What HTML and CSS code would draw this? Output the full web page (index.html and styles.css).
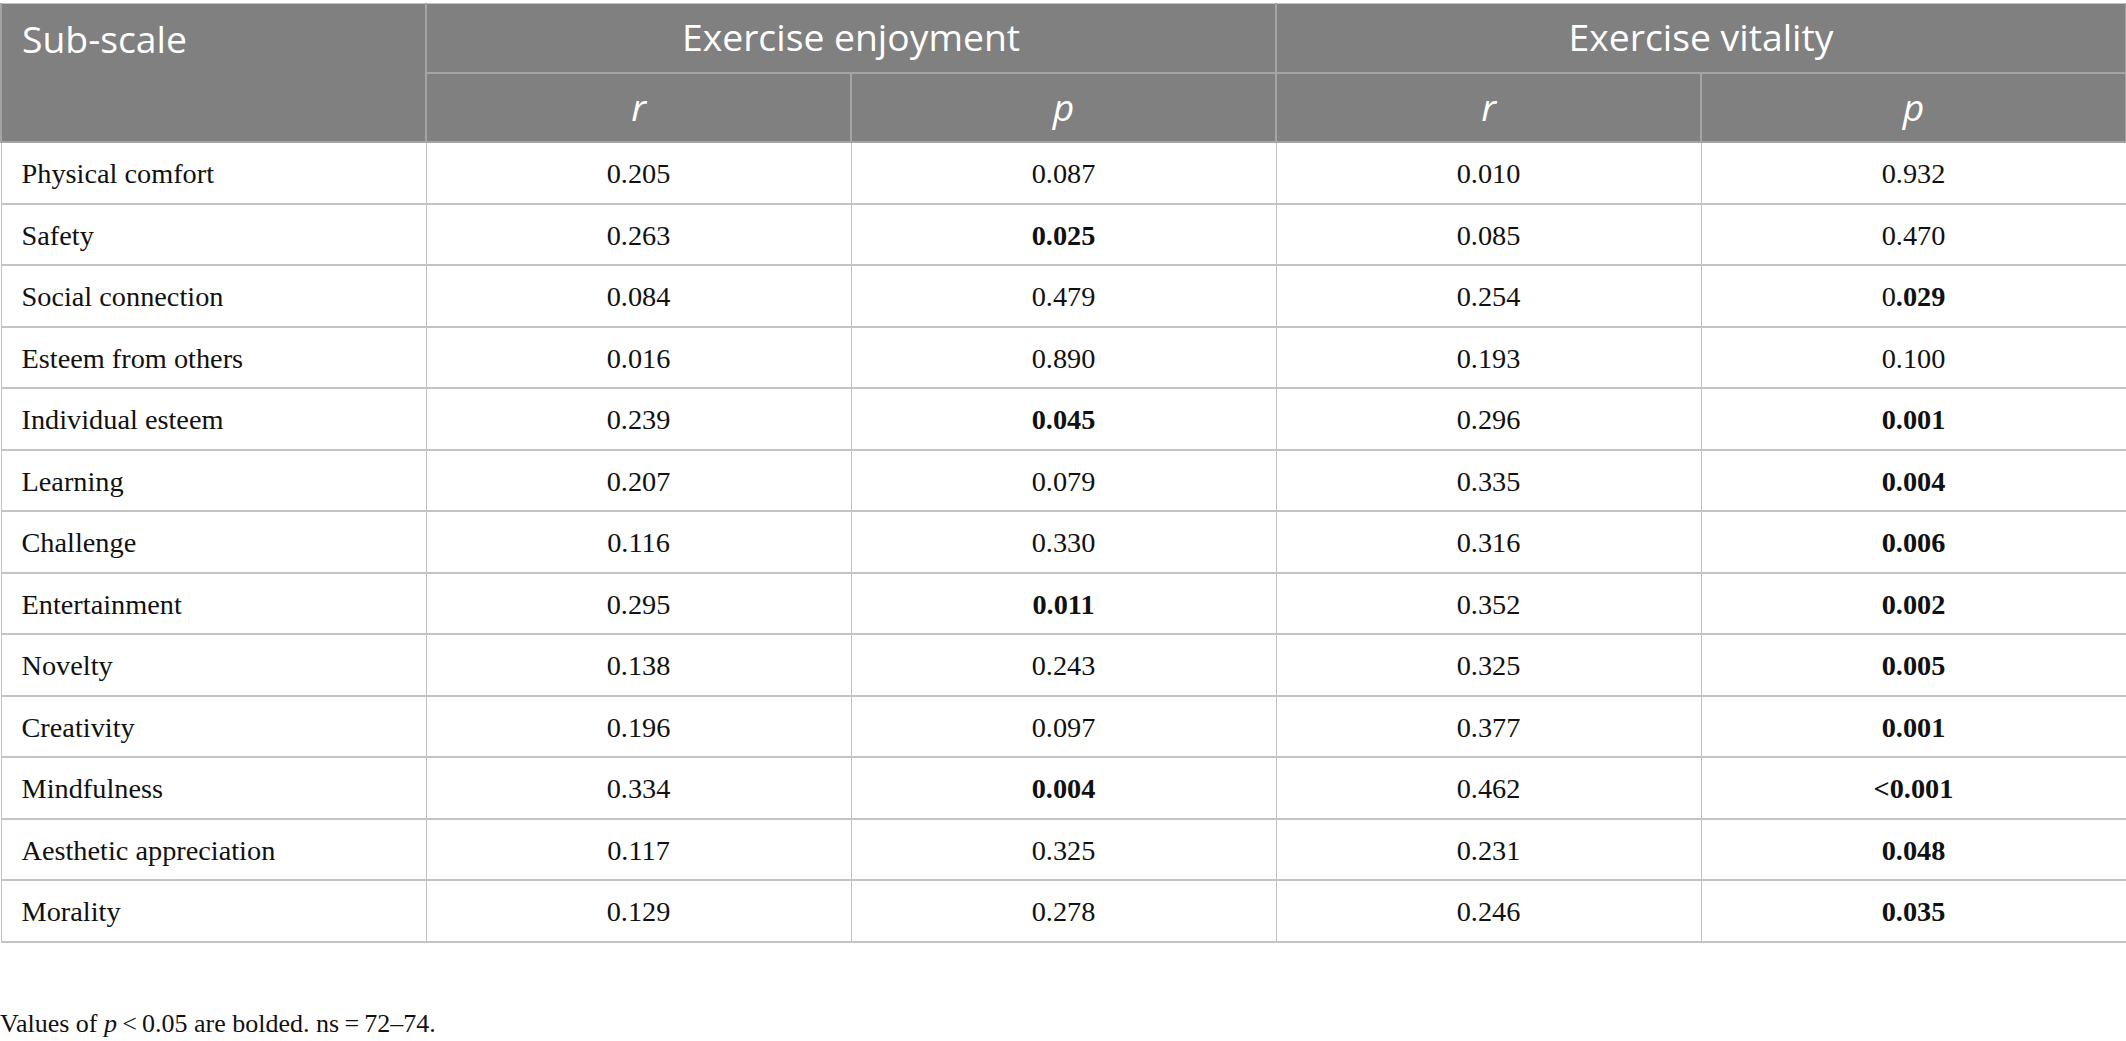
FILE: index.html
```html
<!DOCTYPE html>
<html lang="en">
<head>
<meta charset="utf-8">
<title>Sub-scale correlations</title>
<link rel="stylesheet" href="styles.css">
</head>
<body>
<div class="page">
<table class="data">
  <colgroup>
    <col class="c"><col class="c"><col class="c"><col class="c"><col class="c">
  </colgroup>
  <thead>
    <tr class="h1">
      <th class="first" rowspan="2">Sub-scale</th>
      <th colspan="2">Exercise enjoyment</th>
      <th colspan="2">Exercise vitality</th>
    </tr>
    <tr class="h2">
      <th><i>r</i></th>
      <th><i>p</i></th>
      <th><i>r</i></th>
      <th><i>p</i></th>
    </tr>
  </thead>
  <tbody>
    <tr><td>Physical comfort</td><td>0.205</td><td>0.087</td><td>0.010</td><td>0.932</td></tr>
    <tr><td>Safety</td><td>0.263</td><td><b>0.025</b></td><td>0.085</td><td>0.470</td></tr>
    <tr><td>Social connection</td><td>0.084</td><td>0.479</td><td>0.254</td><td>0<b>.029</b></td></tr>
    <tr><td>Esteem from others</td><td>0.016</td><td>0.890</td><td>0.193</td><td>0.100</td></tr>
    <tr><td>Individual esteem</td><td>0.239</td><td><b>0.045</b></td><td>0.296</td><td><b>0.001</b></td></tr>
    <tr><td>Learning</td><td>0.207</td><td>0.079</td><td>0.335</td><td><b>0.004</b></td></tr>
    <tr><td>Challenge</td><td>0.116</td><td>0.330</td><td>0.316</td><td><b>0.006</b></td></tr>
    <tr><td>Entertainment</td><td>0.295</td><td><b>0.011</b></td><td>0.352</td><td><b>0.002</b></td></tr>
    <tr><td>Novelty</td><td>0.138</td><td>0.243</td><td>0.325</td><td><b>0.005</b></td></tr>
    <tr><td>Creativity</td><td>0.196</td><td>0.097</td><td>0.377</td><td><b>0.001</b></td></tr>
    <tr><td>Mindfulness</td><td>0.334</td><td><b>0.004</b></td><td>0.462</td><td><b>&lt;0.001</b></td></tr>
    <tr><td>Aesthetic appreciation</td><td>0.117</td><td>0.325</td><td>0.231</td><td><b>0.048</b></td></tr>
    <tr><td>Morality</td><td>0.129</td><td>0.278</td><td>0.246</td><td><b>0.035</b></td></tr>
  </tbody>
</table>
<p class="note">Values of <i>p</i>&#8201;&lt;&#8201;0.05 are bolded. ns&#8201;=&#8201;72–74.</p>
</div>
</body>
</html>
```

FILE: styles.css
```css
html, body {
  margin: 0;
  padding: 0;
  background: #ffffff;
}

.page {
  padding-top: 3px;
}

.data {
  border-collapse: collapse;
  table-layout: fixed;
  width: 2126px;
  border: 1px solid #c4c4c4;
}

.data col.c {
  width: 425px;
}

.data th {
  background: #7f807f;
  color: #ffffff;
  font-family: "Open Sans", "Noto Sans", sans-serif;
  font-weight: 400;
  font-size: 37.3px;
  text-align: center;
  vertical-align: middle;
  padding: 0 20px;
  border: 2px solid #a3a4a3;
  line-height: 1.2;
}

.data thead tr.h1 th {
  height: 67.5px;
  border-top: 1px solid #c4c4c4;
}

.data thead tr.h2 th {
  height: 67.5px;
  border-bottom: 2px solid #a3a4a3;
}

.data th.first {
  text-align: left;
  vertical-align: top;
  padding-top: 13px;
}

.data th i {
  font-style: italic;
}

.data td {
  font-family: "Liberation Serif", "Times New Roman", serif;
  font-size: 28.3px;
  color: #111111;
  text-align: center;
  vertical-align: middle;
  padding: 3px 20px 0 20px;
  height: 56.5px;
  border-bottom: 2px solid #c4c4c4;
  border-left: 1px solid #c0c0c0;
  border-right: 1px solid #c0c0c0;
}

.data td:first-child {
  text-align: left;
}

.data td b {
  font-weight: 700;
}

.note {
  margin: 66px 0 0 0;
  font-family: "Liberation Serif", "Times New Roman", serif;
  font-size: 26px;
  color: #111111;
}
```
